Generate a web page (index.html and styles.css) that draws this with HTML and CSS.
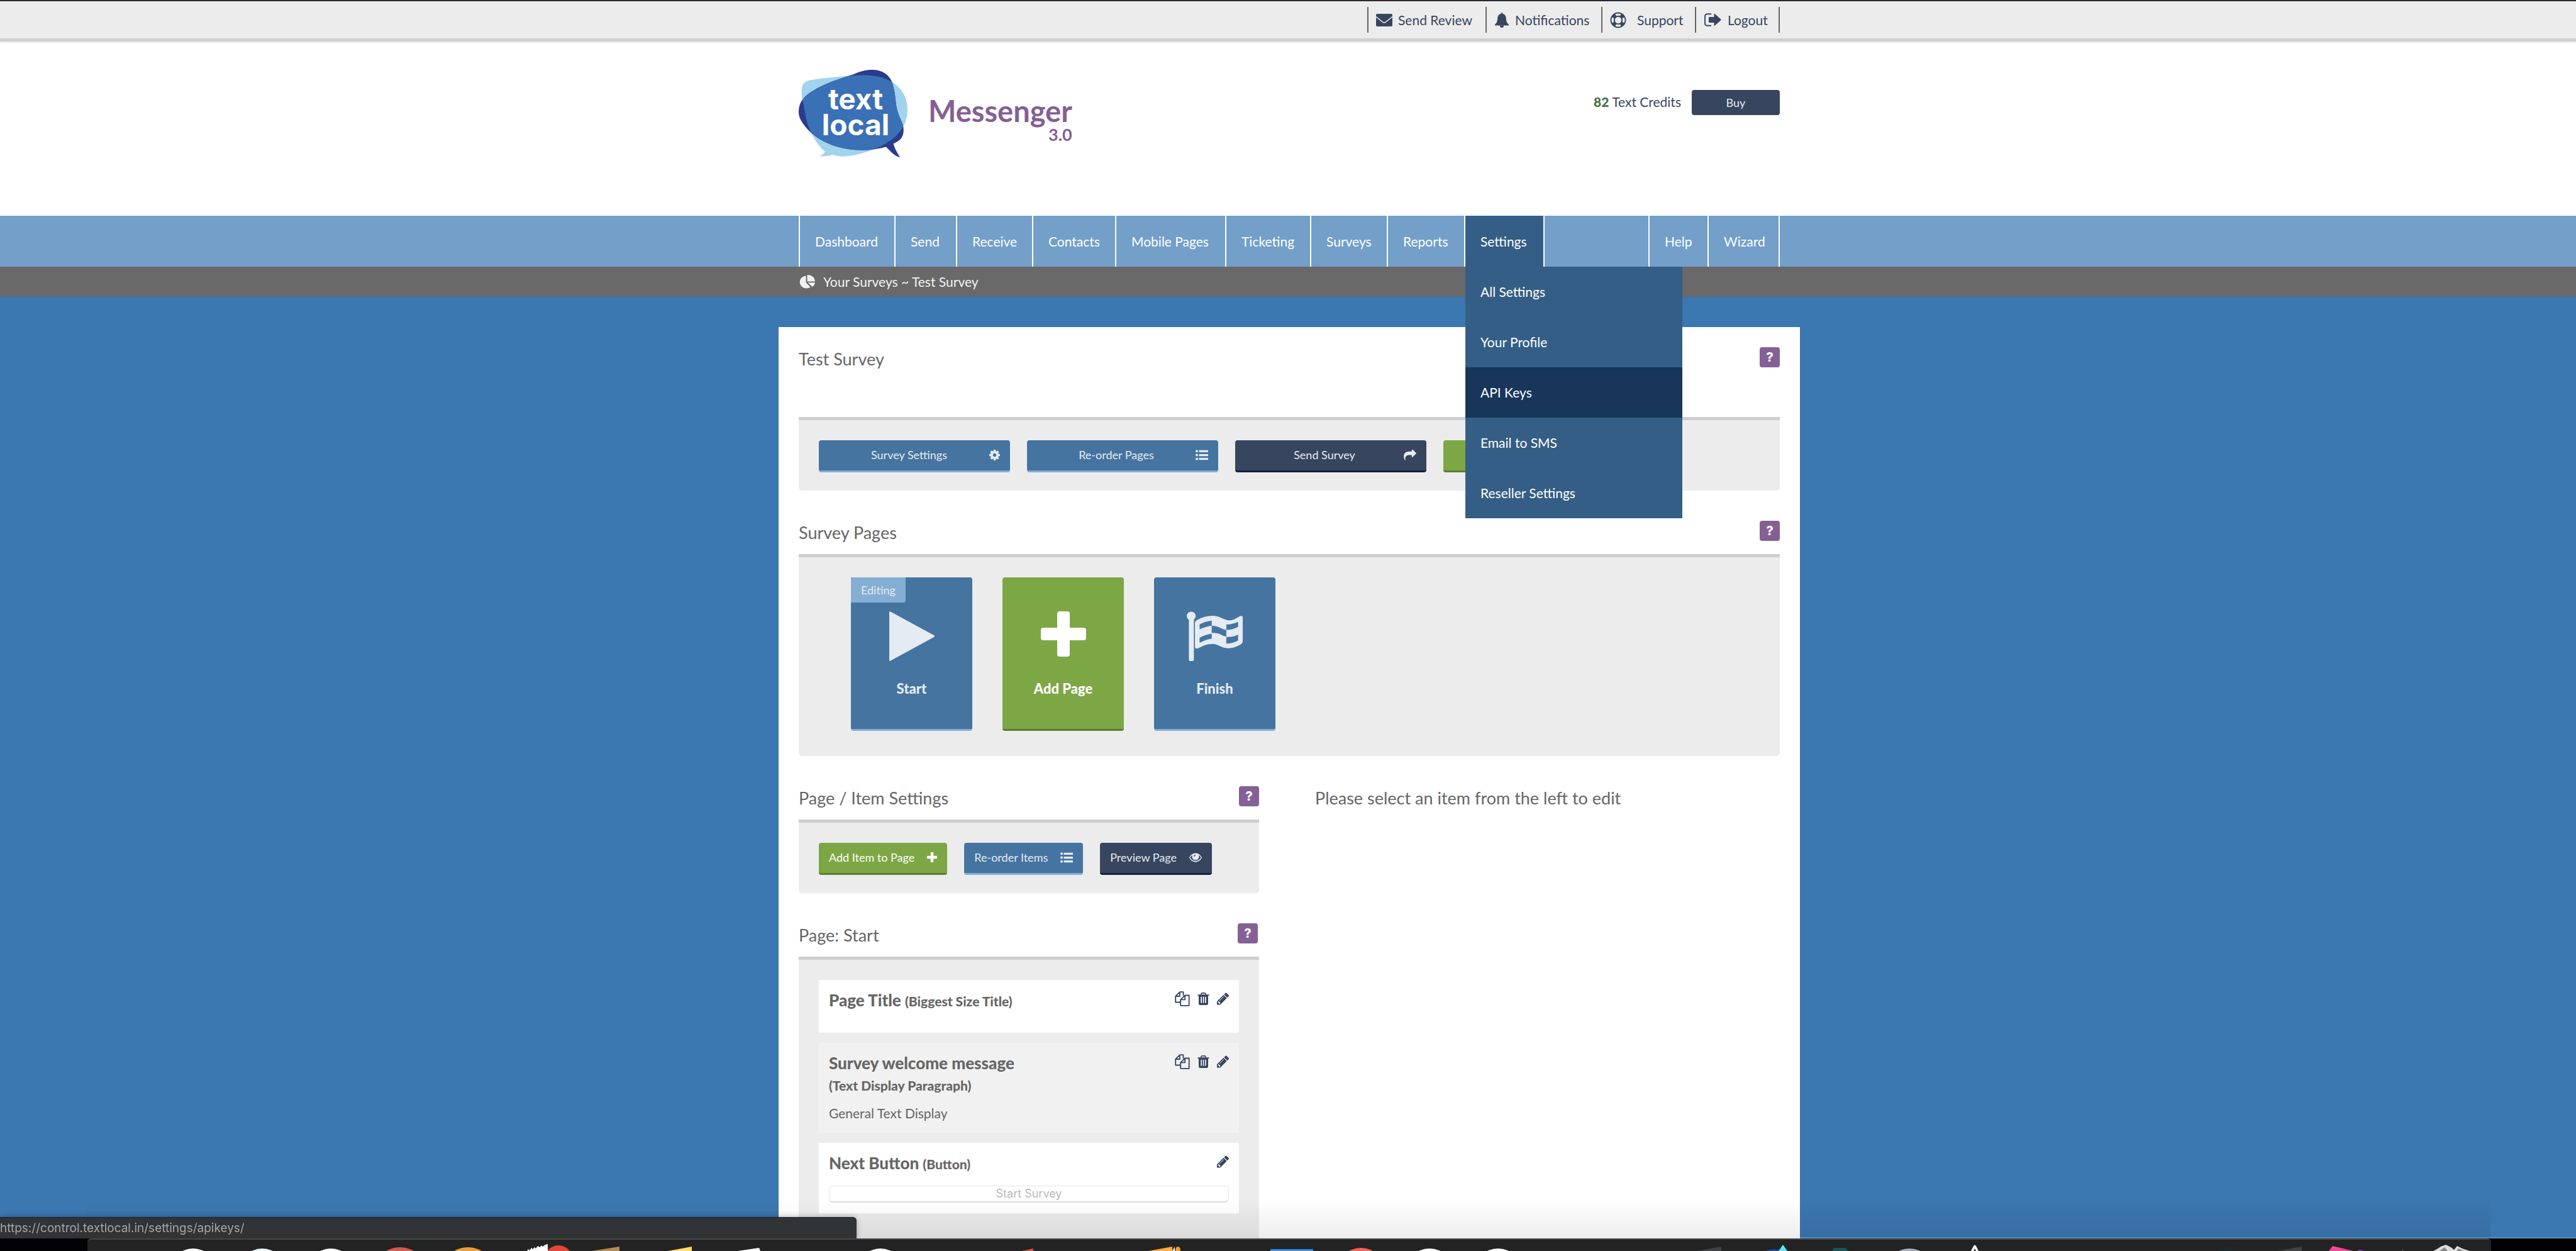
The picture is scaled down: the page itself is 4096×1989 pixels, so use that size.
FILE: index.html
```html
<!DOCTYPE html>
<html lang="en">
<head>
<meta charset="utf-8">
<title>Test Survey - Messenger 3.0</title>
<link rel="stylesheet" href="styles.css">
</head>
<body>
<svg class="sprite" aria-hidden="true">
  <symbol id="cog" viewBox="128 128 1536 1536"><path d="M1152 896q0-106-75-181t-181-75-181 75-75 181 75 181 181 75 181-75 75-181zm512-109v222q0 12-8 23t-20 13l-185 28q-19 54-39 91 35 50 107 138 10 12 10 25t-9 23q-27 37-99 108t-94 71q-12 0-26-9l-138-108q-44 23-91 38-16 136-29 186-7 28-36 28h-222q-14 0-24.500-8.500t-11.500-21.500l-28-184q-49-16-90-37l-141 107q-10 9-25 9-14 0-25-11-126-114-165-168-7-10-7-23 0-12 8-23 15-21 51-66.500t54-70.500q-27-50-41-99l-183-27q-13-2-21-12.500t-8-23.500v-222q0-12 8-23t19-13l186-28q14-46 39-92-40-57-107-138-10-12-10-24 0-10 9-23 26-36 98.500-107.500t94.500-71.500q13 0 26 10l138 107q44-23 91-38 16-136 29-186 7-28 36-28h222q14 0 24.500 8.500t11.500 21.500l28 184q49 16 90 37l142-107q9-9 24-9 13 0 25 10 129 119 165 170 7 8 7 22 0 12-8 23-15 21-51 66.500t-54 70.500q26 50 41 98l183 28q13 2 21 12.500t8 23.500z"/></symbol>
  <symbol id="list" viewBox="0 0 20 17"><circle cx="2" cy="2.300" r="2"/><circle cx="2" cy="8.500" r="2"/><circle cx="2" cy="14.700" r="2"/><rect x="5.500" y=".700" width="14.500" height="3.300" rx=".400"/><rect x="5.500" y="6.900" width="14.500" height="3.300" rx=".400"/><rect x="5.500" y="13" width="14.500" height="3.300" rx=".400"/></symbol>
  <symbol id="share" viewBox="0 128 1792 1536"><path d="M1792 640q0 26-19 45l-512 512q-19 19-45 19t-45-19-19-45v-256h-224q-98 0-175.500 6t-154 21.500-133 42.500-105.500 69.500-80 101-48.500 138.500-17.500 181q0 55 5 123 0 6 2.500 23.500t2.500 26.500q0 15-8.500 25t-23.500 10q-16 0-28-17-7-9-13-22t-13.500-30-10.500-24q-127-285-127-451 0-199 53-333 162-403 875-403h224v-256q0-26 19-45t45-19 45 19l512 512q19 19 19 45z"/></symbol>
  <symbol id="plus" viewBox="0 0 72 72"><path d="M30 0h12q4 0 4 4v22h22q4 0 4 4v12q0 4-4 4H46v22q0 4-4 4H30q-4 0-4-4V46H4q-4 0-4-4V30q0-4 4-4h22V4q0-4 4-4z"/></symbol>
  <symbol id="eye" viewBox="0 0 20 14"><path fill-rule="evenodd" d="M10 0c4.200 0 7.800 2.500 10 7-2.200 4.500-5.800 7-10 7S2.200 11.500 0 7C2.200 2.500 5.800 0 10 0zM5.200 2.900C3.700 3.800 2.400 5.200 1.400 7c2 3.500 5 5.400 8.600 5.400s6.600-1.900 8.600-5.400c-1-1.800-2.300-3.200-3.800-4.100a5.500 5.500 0 1 1-9.600 0z"/><path d="M7 5.400C7 3.500 8.300 2.200 10 2.200v1.200c-1.100 0-1.800.800-1.800 2z" fill="#38455f"/></symbol>
  <symbol id="copy" viewBox="0 0 24 24"><path d="M8 1.200h5.500V7M13.500 7v-5.800M8 1.200 1.200 8v9.500h8M8 1.200V8H1.200M16.200 6.500h6.500v16.300H9.200v-9.500zM16.200 6.500v6.800h-7" fill="none" stroke="currentColor" stroke-width="1.800" stroke-linejoin="round"/></symbol>
  <symbol id="trash" viewBox="192 128 1408 1536"><path d="M704 1376v-704q0-14-9-23t-23-9h-64q-14 0-23 9t-9 23v704q0 14 9 23t23 9h64q14 0 23-9t9-23zm256 0v-704q0-14-9-23t-23-9h-64q-14 0-23 9t-9 23v704q0 14 9 23t23 9h64q14 0 23-9t9-23zm256 0v-704q0-14-9-23t-23-9h-64q-14 0-23 9t-9 23v704q0 14 9 23t23 9h64q14 0 23-9t9-23zm-544-992h448l-48-117q-7-9-17-11h-317q-10 2-17 11zm928 32v64q0 14-9 23t-23 9h-96v948q0 83-47 143.500t-113 60.500h-832q-66 0-113-58.500t-47-141.500v-952h-96q-14 0-23-9t-9-23v-64q0-14 9-23t23-9h309l70-167q15-37 54-63t79-26h320q40 0 79 26t54 63l70 167h309q14 0 23 9t9 23z"/></symbol>
  <symbol id="pencil" viewBox="128 149 1515 1515"><path d="M491 1536l91-91-235-235-91 91v107h128v128h107zm523-928q0-22-22-22-10 0-17 7l-542 542q-7 7-7 17 0 22 22 22 10 0 17-7l542-542q7-7 7-17zm-54-192l416 416-832 832h-416v-416zm683 96q0 53-37 90l-166 166-416-416 166-165q36-38 90-38 53 0 91 38l235 234q37 39 37 91z"/></symbol>
</svg>

<div class="topbar">
  <nav class="wrap toplinks" aria-label="Account">
    <a href="#"><svg class="ic-mail" viewBox="0 0 26 20"><rect width="26" height="20" rx="2"/><path d="M0 4.500 10.500 13q2.500 2 5 0L26 4.500" fill="none" stroke="#ececec" stroke-width="1.600"/></svg>Send Review</a>
    <a href="#" class="mid"><svg class="ic-bell" viewBox="0 0 22 24"><path d="M11 0q1.400 0 1.400 2c3.600.700 5.200 3.500 5.400 7 .300 5 1.200 7.500 4.200 10v1.500H0V19c3-2.500 3.900-5 4.200-10 .200-3.500 1.800-6.300 5.400-7q0-2 1.400-2z"/><path d="M7.800 20.500a3.200 3.500 0 0 0 6.400 0z"/></svg>Notifications</a>
    <a href="#" class="loose"><svg class="ic-ring" viewBox="0 0 26 26"><circle cx="13" cy="13" r="8.800" fill="none" stroke="currentColor" stroke-width="7.200"/><g stroke="#ececec" stroke-width="3.200" fill="none"><path d="M9.200 4.950a8.900 8.900 0 0 1 7.600 0M9.200 21.050a8.900 8.900 0 0 0 7.600 0M4.950 9.200a8.900 8.900 0 0 0 0 7.600M21.050 9.200a8.900 8.900 0 0 1 0 7.600"/></g></svg>Support</a>
    <a href="#" class="mid"><svg class="ic-out" viewBox="0 0 27 21"><path d="M11 1.200H5Q1 1.200 1 5v11q0 3.800 4 3.800h6" fill="none" stroke="currentColor" stroke-width="1.900"/><path d="M7 7q0-1 1-1h7.500V1.600q0-1.600 1.300-.400l9.400 8.400q.800.800 0 1.600l-9.400 8.400q-1.300 1.200-1.300-.400V15H8q-1 0-1-1z"/></svg>Logout</a>
  </nav>
</div>

<header class="wrap header">
  <div class="brand">
    <div class="logo">
      <svg viewBox="57 55 565 520" preserveAspectRatio="none" aria-hidden="true">
        <defs><clipPath id="bubble"><path d="M57 305C57 250 80 215 130 180C190 135 280 105 345 80C380 62 410 55 442 55C490 55 525 85 541 125C562 200 558 240 566 280C576 340 602 370 602 410C602 460 580 478 549 494C555 525 570 550 583 576C550 565 535 540 510 513C470 525 430 533 385 533C250 533 150 470 100 405C70 365 57 340 57 305Z"/></clipPath></defs>
        <path fill="#a1d4ec" d="M72 190C72 130 90 120 140 112C220 100 350 85 410 87C560 95 622 190 622 290C622 400 560 455 520 485C440 545 330 570 285 570C265 570 245 565 232 560C210 568 190 570 163 569C180 562 188 552 194 541C150 500 110 420 95 340C85 270 72 230 72 190Z"/>
        <g clip-path="url(#bubble)"><rect x="57" y="55" width="565" height="522" fill="#2b3a8c"/><path fill="#3a70b5" d="M72 190C72 130 90 120 140 112C220 100 350 85 410 87C560 95 622 190 622 290C622 400 560 455 520 485C490 510 465 520 440 527L385 540L232 540L140 460C115 420 102 380 95 340C85 270 72 230 72 190Z"/></g>
      </svg>
      <span class="logo-text">text<br>local</span>
    </div>
    <div class="product">Messenger<small>3.0</small></div>
  </div>
  <div class="credits"><span><b>82</b> Text Credits</span><button class="buy">Buy</button></div>
</header>

<div class="navbar">
  <nav class="wrap mainnav" aria-label="Main">
    <a href="#">Dashboard</a><a href="#">Send</a><a href="#">Receive</a><a href="#">Contacts</a><a href="#">Mobile Pages</a><a href="#">Ticketing</a><a href="#">Surveys</a><a href="#">Reports</a>
    <div class="has-menu"><a href="#" class="open">Settings</a>
      <div class="menu"><a href="#">All Settings</a><a href="#">Your Profile</a><a href="#" class="hover">API Keys</a><a href="#">Email to SMS</a><a href="#">Reseller Settings</a></div>
    </div>
    <span class="spacer"></span>
    <a href="#">Help</a><a href="#" class="last">Wizard</a>
  </nav>
</div>

<div class="crumbs"><div class="wrap crumb"><svg class="ic-pie" viewBox="0 0 26 22"><path d="M11.500 1.500V12l7 7.500A10.500 10 0 1 1 11.500 1.500z"/><path d="M13.500 0q11.500.500 12.500 10.500H13.500zM14.500 12.300H26q-.500 4-4.500 6.700z"/></svg>Your Surveys ~ Test Survey</div></div>

<main class="sheet">
  <div class="head tall"><h2>Test Survey</h2><button class="help">?</button></div>
  <div class="box row">
    <button class="btn wide"><span>Survey Settings</span><svg class="i17"><use href="#cog"/></svg></button>
    <button class="btn wide"><span>Re-order Pages</span><svg class="i20"><use href="#list"/></svg></button>
    <button class="btn wide dark"><span>Send Survey</span><svg class="i20"><use href="#share"/></svg></button>
    <button class="btn wide green"><span>View Survey</span><svg class="i20"><use href="#eye"/></svg></button>
  </div>

  <div class="head"><h2>Survey Pages</h2><button class="help">?</button></div>
  <div class="box tiles">
    <button class="tile"><span class="badge">Editing</span><svg class="tile-icon" viewBox="0 0 72 79"><path d="M0 1.500Q0-.500 2 .600L71 38q2 1.500 0 3L2 78.400Q0 79.500 0 77.500z"/></svg>Start</button>
    <button class="tile green"><svg class="tile-icon"><use href="#plus"/></svg>Add Page</button>
    <button class="tile"><svg class="tile-icon flag" viewBox="1216 1029 157 171" preserveAspectRatio="none"><ellipse cx="1228.500" cy="1045" rx="12.500" ry="15"/><rect x="1222" y="1050" width="14" height="150" rx="5"/><path fill-rule="evenodd" d="M1239 1069q0-6 6-10q20-15 44-15q12 0 25 8q14 8 23 8q10 0 23-11q13-9 13 1v80q0 8-5 12q-18 14-36 14q-12 0-24-8q-12-7-20-7q-18 0-38 14q-11 6-11-4zM1252 1074v17q14-9 34-13v-17q-20 3-34 13zM1286 1078v25q16-1 26 6q8 7 15 7v-23q-8-1-15-6q-10-8-26-9zM1327 1074v19q18 0 33-11v-17q-16 9-33 9zM1252 1120v17q14-10 34-14v-17q-20 4-34 14zM1327 1117v23q18 0 33-11v-20q-16 10-33 8z"/></svg>Finish</button>
  </div>

  <div class="columns">
    <section>
      <div class="head"><h2>Page / Item Settings</h2><button class="help">?</button></div>
      <div class="box row">
        <button class="btn green"><span>Add Item to Page</span><svg class="i16"><use href="#plus"/></svg></button>
        <button class="btn"><span>Re-order Items</span><svg class="i20"><use href="#list"/></svg></button>
        <button class="btn dark"><span>Preview Page</span><svg class="i20"><use href="#eye"/></svg></button>
      </div>
      <div class="head inset"><h2>Page: Start</h2><button class="help">?</button></div>
      <div class="box items">
        <article class="item">
          <div class="item-head"><h3>Page Title <small>(Biggest Size Title)</small></h3><div class="tools"><a href="#" aria-label="Copy"><svg class="t-copy"><use href="#copy"/></svg></a><a href="#" aria-label="Delete"><svg class="t-edit"><use href="#trash"/></svg></a><a href="#" aria-label="Edit"><svg class="t-edit"><use href="#pencil"/></svg></a></div></div>
        </article>
        <article class="item muted">
          <div class="item-head"><h3>Survey welcome message</h3><div class="tools"><a href="#" aria-label="Copy"><svg class="t-copy"><use href="#copy"/></svg></a><a href="#" aria-label="Delete"><svg class="t-edit"><use href="#trash"/></svg></a><a href="#" aria-label="Edit"><svg class="t-edit"><use href="#pencil"/></svg></a></div></div>
          <p class="kind">(Text Display Paragraph)</p>
          <p class="body">General Text Display</p>
        </article>
        <article class="item">
          <div class="item-head"><h3>Next Button <small>(Button)</small></h3><div class="tools"><a href="#" aria-label="Edit"><svg class="t-edit"><use href="#pencil"/></svg></a></div></div>
          <button class="preview" disabled>Start Survey</button>
        </article>
      </div>
    </section>
    <section><h2>Please select an item from the left to edit</h2></section>
  </div>
</main>

<div class="edge"></div>
<div class="dock-shade"></div>
<div class="status">https://control.textlocal.in/settings/apikeys/</div>
<div class="desktop">
  <div class="dock"></div>
  <svg class="dock-icons" viewBox="0 1969 4096 20" preserveAspectRatio="none" aria-hidden="true">
    <g fill="#fff"><circle cx="307" cy="2023" r="38"/><circle cx="417" cy="2023" r="38" fill="#eef8fc"/><circle cx="526" cy="2023" r="38"/><circle cx="1400" cy="2023" r="38"/><circle cx="2273" cy="2024" r="39"/><circle cx="2382" cy="2024" r="39"/></g>
    <circle cx="636" cy="2026" r="43" fill="#d05a4e"/><circle cx="744" cy="2026" r="43" fill="#e79f3c"/>
    <path fill="#fff" d="M838 1989l2-3 2 2 3-4 2 2 3-3 2 2 3-4 3 2 3-3 2 2 4-3 4-1v12z"/><ellipse cx="888" cy="1995" rx="19" ry="15" fill="#df473b"/>
    <path fill="#b08d5b" d="M941 1989l44-7v7z"/><path fill="#fbdc69" d="M1062 1989l38-7v7z"/><path fill="#fff" d="M1173 1989l34-5 2 5z"/>
    <path fill="#d05a4e" d="M1625 1989l18-4v4z"/><path fill="#fbae42" d="M1826 1989l38-7v7z"/><path fill="#f0a03a" d="M1869 1989q0-7 4-7t4 7z"/><path fill="#fff" d="M1864 1989l4-7v7z"/>
    <path fill="#3b8ee0" d="M2020 1986h68v3h-68z"/><circle cx="2164" cy="2024" r="40" fill="#f2625c"/>
    <path fill="#414244" d="M2698 1989l39-7v7zM3621 1989l39-7v7z"/><path fill="#214b9b" d="M2807 1989q12-5 24-1v1z"/><path fill="#65e2fa" d="M2828 1989l7-10 7 10z"/>
    <path fill="#1d5255" d="M2913 1989l3-5h19l4 5z"/><circle cx="3036" cy="2024" r="39" fill="#a9aebb"/><path fill="#fff" d="M3134 1989l4-8q2-3 4 0l4 8h-4l-2-4-2 4z"/>
    <path fill="#1a2a2d" d="M3523 1989l27-7v7z"/><path fill="#ec4a94" d="M3703 1989l6-8 33 8z"/><path fill="#8f4bd0" d="M3748 1989l4-2 8 2z"/><path fill="#777" d="M3820 1986h1v3h-1z"/>
    <path fill="#ddd" d="M3869 1989l4-2 8-5 8-3 8 4 5 4 5-6 8 4 12 4z"/><path fill="#888" d="M3879 1989l8-6 5 6zM3906 1989l3-4 9 4z"/>
  </svg>
</div>
</body>
</html>
```
FILE: styles.css
```css
* { box-sizing: border-box; }
html, body { height: 100%; }
body {
  margin: 0;
  overflow: hidden;
  display: flex;
  flex-direction: column;
  background: #3b77b0;
  color: #666;
  font: 21px/32px Lato, "Open Sans", sans-serif;
}
a { color: inherit; text-decoration: none; }
button { font: inherit; border: 0; margin: 0; padding: 0; cursor: pointer; }
h2, h3, p { margin: 0; }
svg { display: block; fill: currentColor; flex: none; }
.sprite { position: absolute; width: 0; height: 0; }

.wrap { width: 100%; max-width: 1560px; margin: 0 auto; position: relative; left: 2px; }

.topbar {
  flex: none;
  height: 66px;
  background: #ececec;
  border-top: 2px solid #2a2a2c;
  border-bottom: 5px solid #cfcfcf;
  box-shadow: 0 1px 3px rgba(0, 0, 0, .15);
  color: #38455f;
}
.toplinks { display: grid; grid-template-columns: 188px 184px 149px 135px; justify-content: end; padding-top: 9px; }
.toplinks a { height: 41px; display: flex; align-items: center; gap: 9px; padding-left: 12px; border-left: 2px solid #666; }
.toplinks a:last-child { border-right: 2px solid #666; }
.toplinks .loose { gap: 17px; }
.toplinks .mid { gap: 10px; padding-left: 13px; }
.ic-mail { width: 26px; height: 20px; }
.ic-bell { width: 22px; height: 24px; }
.ic-ring { width: 26px; height: 26px; }
.ic-out { width: 27px; height: 21px; }

.header, .navbar, .crumbs { flex: none; }
.header { height: 277px; display: flex; justify-content: space-between; align-items: flex-start; }
body::before { content: ""; position: absolute; z-index: -1; left: 0; right: 0; top: 0; height: 343px; background: #fff; }
.brand { display: flex; padding-top: 45px; gap: 33px; }
.logo { position: relative; width: 173px; height: 139px; }
.logo svg { width: 173px; height: 139px; }
.logo-text { position: absolute; inset: 26px 0 0 0; padding-left: 8px; text-align: center; color: #fff; font: 700 46px/41px Inter, sans-serif; }
.product { padding-top: 38px; color: #845f95; font-size: 47px; font-weight: 700; line-height: 54px; text-align: right; }
.product small { display: block; font-size: 27px; line-height: 22px; }
.credits { display: flex; align-items: center; gap: 17px; margin-top: 77px; height: 40px; color: #38455f; }
.credits span { padding-bottom: 3px; }
.credits b { color: #477243; font-weight: 900; }
.buy { width: 140px; height: 40px; border-radius: 4px; background: #38455f; color: #e5ebf2; font-size: 18px; }

.navbar { background: #739fc8; color: #fff; position: relative; z-index: 2; }
.mainnav { display: grid; grid-template-columns: 152px 98px 121px 132px 175px 135px 122px 123px 126px 1fr 94px 115px; height: 81px; }
.mainnav > a, .has-menu, .spacer { border-left: 2px solid #fff; }
.mainnav a { display: flex; align-items: center; padding-left: 24px; height: 81px; white-space: nowrap; }
.mainnav .last { border-right: 2px solid #fff; }
.has-menu { position: relative; }
.mainnav .open { background: #345e85; }
.menu { position: absolute; top: 81px; left: 0; width: 345px; background: #345e85; }
.mainnav .menu a { height: 80px; }
.mainnav .menu .hover { background: #18365a; }

.crumbs { background: #696969; color: #f2f2f2; }
.crumb { height: 48px; display: flex; align-items: center; gap: 13px; }
.ic-pie { width: 26px; height: 22px; }

.sheet { flex: 1 1 0; min-height: 0; overflow: hidden; width: 100%; max-width: 1624px; margin: 48px auto 0; position: relative; left: 2px; padding: 32px 32px 0; background: #fff; }
.head { display: flex; justify-content: space-between; align-items: flex-start; height: 53px; }
.head.tall { height: 111px; }
.head.inset { padding-right: 2px; }
h2 { font-size: 27px; line-height: 38px; font-weight: 400; }
.help { width: 32px; height: 32px; border-radius: 4px; background: #846095; color: #fff; font: 800 20px/32px Inter, sans-serif; }
.box { margin-bottom: 48px; padding: 32px 32px 29px; border-top: 5px solid #cdcdcd; border-radius: 0 0 5px 5px; background: #ececec; }
.row { display: flex; gap: 27px; }
.btn {
  display: flex;
  align-items: center;
  gap: 20px;
  height: 51px;
  padding: 0 16px 2px;
  border-bottom: 3px solid #84aed4;
  border-radius: 4px;
  background: #4574a0;
  color: #e5ebf2;
  font-size: 18px;
  white-space: nowrap;
}
.btn.wide { width: 304px; gap: 0; }
.btn.wide span { flex: 1; }
.btn.dark { background: #38455f; border-color: #152044; }
.btn.green { background: #7da745; border-color: #5c7b33; color: #fff; }
.i16 { width: 16px; height: 16px; }
.i17 { width: 17px; height: 17px; }
.i20 { width: 20px; height: 17px; }

.tiles { display: flex; gap: 48px; padding: 32px 83px 40px; }
.tile {
  position: relative;
  width: 193px;
  height: 244px;
  display: flex;
  flex-direction: column;
  align-items: center;
  justify-content: flex-start;
  gap: 28px;
  padding-top: 54px;
  border-bottom: 3px solid #84aed4;
  border-radius: 4px;
  background: #4574a0;
  color: #e5ebf2;
  font-size: 22px;
  font-weight: 900;
}
.tile.green { background: #7da745; border-color: #5c7b33; color: #fff; }
.tile-icon { width: 72px; height: 79px; }
.tile.green .tile-icon { height: 72px; margin-bottom: 7px; }
.tile-icon.flag { width: 89px; }
.badge { position: absolute; left: 0; top: 0; padding: 0 16px; border-radius: 0 0 4px 0; background: #84aed4; font-size: 18px; line-height: 40px; font-weight: 400; }

.columns { display: grid; grid-template-columns: 732px 1fr; gap: 89px; }
.items { padding: 32px; margin: 0; display: flex; flex-direction: column; gap: 16px; min-height: 600px; }
.item { padding: 16px 16px 34px; background: #fff; }
.item.muted { background: #f1f1f1; padding-bottom: 15px; }
.item:last-child { padding-bottom: 17px; }
.item-head { display: flex; justify-content: space-between; }
h3 { font-size: 26px; font-weight: 900; }
h3 small, .kind { font-size: 21px; font-weight: 900; }
.kind { margin-top: 4px; }
.body { margin-top: 12px; }
.tools { display: flex; gap: 12px; align-items: center; height: 28px; color: #38455f; }
.t-copy { width: 24px; height: 24px; }
.t-edit { width: 19px; height: 20px; }
.preview { display: block; width: 100%; height: 27px; margin-top: 18px; border: 1px solid #e6e6e6; border-bottom: 2px solid #dcdcdc; border-radius: 6px; background: #fff; color: #b9b9b9; font: 18px/24px Inter, sans-serif; }

.edge { position: fixed; left: calc(50% + 814px); right: 0; bottom: 20px; height: 2px; background: #5b91c6; z-index: 3; }
.dock-shade { position: fixed; left: 139px; right: 136px; bottom: 20px; height: 60px; background: linear-gradient(rgba(0, 0, 0, 0), rgba(0, 0, 0, .07)); z-index: 3; }
.status { position: fixed; left: 0; bottom: 20px; width: 1362px; height: 34px; z-index: 4; background: #303437; border-top: 1px solid #1c2228; border-radius: 0 6px 0 0; box-shadow: 0 0 8px rgba(0, 0, 0, .3); color: #a3a5a6; font: 19px/34px Inter, sans-serif; }
.desktop { position: fixed; left: 0; right: 0; bottom: 0; height: 20px; background: #020204; z-index: 5; }
.dock { margin: 0 135px 0 139px; height: 20px; background: #232323; border-top: 2px solid #454545; border-radius: 6px 6px 0 0; }
.dock-icons { position: absolute; left: 0; bottom: 0; width: 100%; height: 20px; }
```
